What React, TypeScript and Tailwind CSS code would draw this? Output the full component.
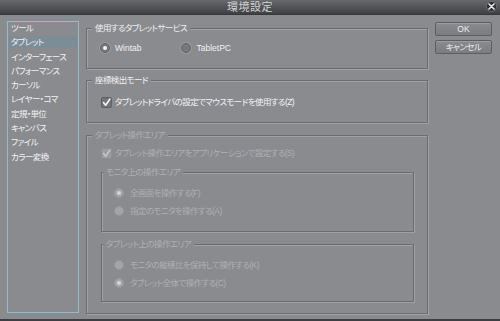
import React from "react";

const font = "[font-family:'Liberation_Sans','Noto_Sans_CJK_JP',sans-serif] [font-feature-settings:'palt']";
const jp = "text-[8.5px] tracking-[-0.6px] whitespace-nowrap";

function Radio({ checked, disabled }: { checked?: boolean; disabled?: boolean }) {
  if (disabled) {
    return (
      <span className="w-[10px] h-[10px] rounded-full border border-[#97989b] bg-[#a3a4a7] flex items-center justify-center shrink-0">
        {checked && <span className="w-[4px] h-[4px] rounded-full bg-[#d6d6d8]" />}
      </span>
    );
  }
  return (
    <span className="w-[10px] h-[10px] rounded-full border border-[#616266] bg-[#77787c] shadow-[0_0_0_1px_#9a9b9f] flex items-center justify-center shrink-0">
      {checked && <span className="w-[4px] h-[4px] rounded-full bg-[#f4f4f4]" />}
    </span>
  );
}

function Check({ disabled }: { disabled?: boolean }) {
  return (
    <span
      className={
        "w-[11px] h-[11px] rounded-[2px] border flex items-center justify-center shrink-0 " +
        (disabled ? "border-[#8f9093] bg-[#9b9c9f]" : "border-[#5e5f63] bg-[#737478]")
      }
    >
      <svg width="9" height="9" viewBox="0 0 9 9">
        <path
          d="M1.5 4.6 L3.6 7.2 L7.8 1.2"
          fill="none"
          stroke={disabled ? "#c4c5c7" : "#f6f6f6"}
          strokeWidth="1.6"
          strokeLinecap="round"
          strokeLinejoin="round"
        />
      </svg>
    </span>
  );
}

const etched = "border border-[#6c6d71] shadow-[1px_1px_0_#a0a1a5,inset_1px_1px_0_#a0a1a5]";

function Group({
  label,
  disabled,
  className,
  legendClass,
  children,
}: {
  label: string;
  disabled?: boolean;
  className?: string;
  legendClass?: string;
  children: React.ReactNode;
}) {
  return (
    <fieldset className={etched + " " + (className ?? "")}>
      <legend
        className={
          "h-[12px] leading-[12px] px-[3px] bg-[#8a8b8f] " +
          jp +
          " " +
          (disabled ? "text-[#aeafb2] " : "text-[#f0f0f0] ") +
          (legendClass ?? "ml-[5px]")
        }
      >
        {label}
      </legend>
      {children}
    </fieldset>
  );
}

const items = [
  "ツール",
  "タブレット",
  "インターフェース",
  "パフォーマンス",
  "カーソル",
  "レイヤー・コマ",
  "定規・単位",
  "キャンバス",
  "ファイル",
  "カラー変換",
];

export default function App() {
  return (
    <div className={"w-[500px] h-[321px] bg-[#8a8b8f] flex flex-col border-b-2 border-[#3e3f42] " + font}>
      <div className="h-[15px] shrink-0 relative bg-gradient-to-b from-[#68696c] to-[#3f4043] border-b border-[#36373a] flex items-center justify-center">
        <span className="text-[11px] leading-[14px] text-[#d2d2d2] tracking-[0.5px]">環境設定</span>
        <span className="absolute right-[3px] top-[1px] w-[11px] h-[11px] rounded-full bg-[#2c2c2e] border border-[#6d6e71] flex items-center justify-center">
          <svg width="7" height="7" viewBox="0 0 7 7">
            <path d="M1 1 L6 6 M6 1 L1 6" stroke="#e8e8e8" strokeWidth="1.6" strokeLinecap="round" />
          </svg>
        </span>
      </div>

      <div className="flex pl-[7px] pt-[6px]">
        <div className="w-[72px] h-[292px] border border-[#93bccb] flex flex-col gap-[2.3px] px-[1px]">
          {items.map((t, i) => (
            <div
              key={t}
              className={
                "h-[12px] leading-[12px] text-[#f2f2f2] pl-[2px] " +
                jp +
                " " +
                (i === 1 ? "bg-[#7d8d98]" : "")
              }
            >
              {t}
            </div>
          ))}
        </div>

        <div className="ml-[7px] mt-[1px] w-[342px] flex flex-col">
          <Group label="使用するタブレットサービス">
            <div className="h-[34px] pt-[8px] pl-[13px] flex items-start">
              <div className="flex items-center h-[12px] gap-[5px]">
                <Radio checked />
                <span className="text-[8.5px] text-[#f0f0f0]">Wintab</span>
              </div>
              <div className="flex items-center h-[12px] gap-[5px] ml-[40px]">
                <Radio />
                <span className="text-[8.5px] text-[#f0f0f0]">TabletPC</span>
              </div>
            </div>
          </Group>

          <Group label="座標検出モード" className="mt-[5px]">
            <div className="h-[36px] pt-[11px] pl-[14px] flex items-start">
              <div className="flex items-center gap-[3px] h-[11px]">
                <Check />
                <span className={jp + " text-[#f2f2f2]"}>
                  タブレットドライバの設定でマウスモードを使用する(Z)
                </span>
              </div>
            </div>
          </Group>

          <Group label="タブレット操作エリア" disabled className="mt-[6px]">
            <div className="h-[172px] pt-[7px] pl-[14px] pr-[13px] flex flex-col">
              <div className="flex items-center gap-[3px] h-[11px]">
                <Check disabled />
                <span className={jp + " text-[#aeafb2]"}>
                  タブレット操作エリアをアプリケーションで設定する(S)
                </span>
              </div>

              <Group label="モニタ上の操作エリア" disabled className="mt-[7px]" legendClass="ml-[1px]">
                <div className="h-[53px] pt-[9px] pl-[12px] flex flex-col gap-[6px]">
                  <div className="flex items-center gap-[6px] h-[12px]">
                    <Radio checked disabled />
                    <span className={jp + " text-[#aeafb2]"}>全画面を操作する(F)</span>
                  </div>
                  <div className="flex items-center gap-[6px] h-[12px]">
                    <Radio disabled />
                    <span className={jp + " text-[#aeafb2]"}>指定のモニタを操作する(A)</span>
                  </div>
                </div>
              </Group>

              <Group label="タブレット上の操作エリア" disabled className="mt-[6px]" legendClass="ml-[1px]">
                <div className="h-[51px] pt-[9px] pl-[12px] flex flex-col gap-[6px]">
                  <div className="flex items-center gap-[6px] h-[12px]">
                    <Radio disabled />
                    <span className={jp + " text-[#aeafb2]"}>モニタの縦横比を保持して操作する(K)</span>
                  </div>
                  <div className="flex items-center gap-[6px] h-[12px]">
                    <Radio checked disabled />
                    <span className={jp + " text-[#aeafb2]"}>タブレット全体で操作する(C)</span>
                  </div>
                </div>
              </Group>
            </div>
          </Group>
        </div>

        <div className="ml-[7px] mt-[1px] w-[57px] flex flex-col gap-[4px]">
          <button className="h-[14px] rounded-[2px] border border-[#5d5e62] bg-gradient-to-b from-[#8a8b8f] to-[#7b7c80] shadow-[inset_0_1px_0_#9c9da1] text-[8.5px] leading-[12px] text-[#ececec]">
            OK
          </button>
          <button className={"h-[14px] rounded-[2px] border border-[#5d5e62] bg-gradient-to-b from-[#8a8b8f] to-[#7b7c80] shadow-[inset_0_1px_0_#9c9da1] leading-[12px] text-[#ececec] " + jp}>
            キャンセル
          </button>
        </div>
      </div>
    </div>
  );
}
